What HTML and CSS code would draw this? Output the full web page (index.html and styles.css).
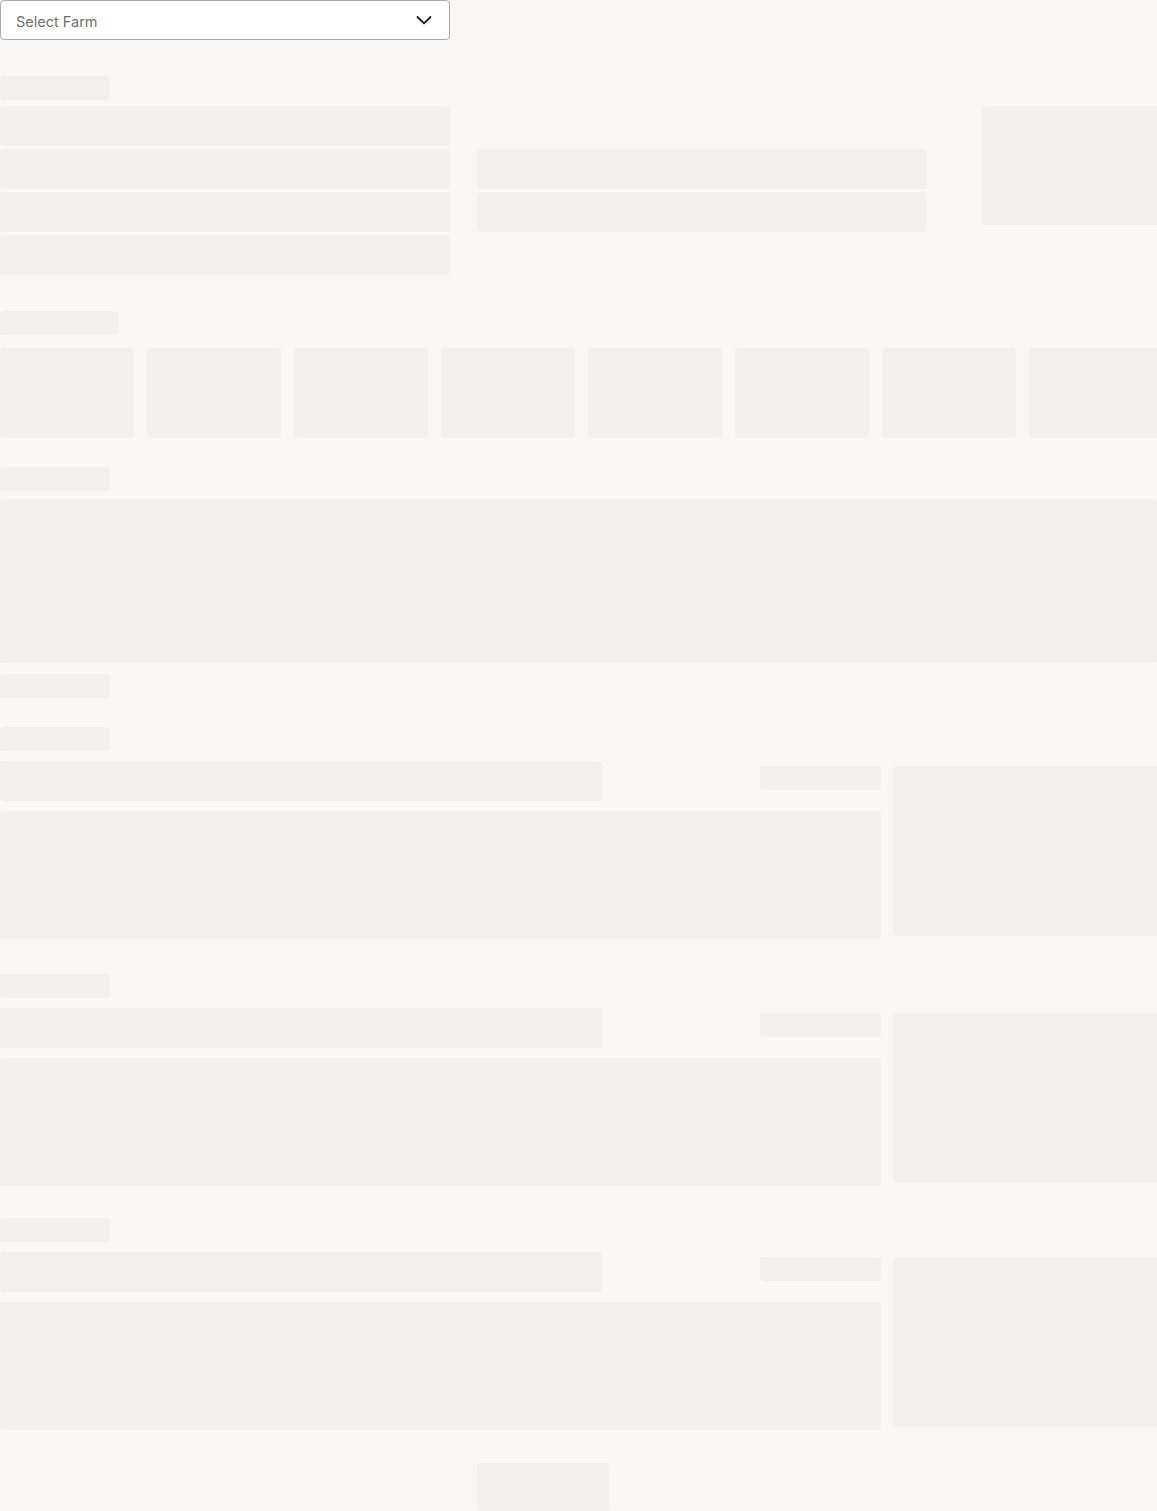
FILE: index.html
```html
<!DOCTYPE html>
<html lang="en">
<head>
<meta charset="utf-8">
<title>Farm dashboard</title>
<link rel="stylesheet" href="styles.css">
</head>
<body>
<div class="page">
  <div class="select">
    <span class="select-text">Select Farm</span>
    <svg class="chevron" width="16" height="10" viewBox="0 0 16 10" aria-hidden="true">
      <path d="M1.5 2 L8 8.3 L14.5 2" fill="none" stroke="#1c1c1c" stroke-width="1.8" stroke-linecap="round" stroke-linejoin="round"/>
    </svg>
  </div>

  <section class="s1">
    <div class="sk label"></div>
    <div class="s1-row">
      <div class="s1-left">
        <div class="sk bar450"></div>
        <div class="sk bar450"></div>
        <div class="sk bar450"></div>
        <div class="sk bar450"></div>
      </div>
      <div class="s1-mid">
        <div class="sk bar450"></div>
        <div class="sk bar450"></div>
      </div>
      <div class="sk s1-side"></div>
    </div>
  </section>

  <section class="s2">
    <div class="sk label label-wide"></div>
    <div class="cards">
      <div class="sk card"></div>
      <div class="sk card"></div>
      <div class="sk card"></div>
      <div class="sk card"></div>
      <div class="sk card"></div>
      <div class="sk card"></div>
      <div class="sk card"></div>
      <div class="sk card"></div>
    </div>
  </section>

  <section class="s3">
    <div class="sk label"></div>
    <div class="sk wide-block"></div>
    <div class="sk label label-after"></div>
  </section>

  <section class="group g1">
    <div class="sk label"></div>
    <div class="group-row">
      <div class="group-left">
        <div class="group-top">
          <div class="sk bar602"></div>
          <div class="sk small-bar"></div>
        </div>
        <div class="sk big-block"></div>
      </div>
      <div class="sk side-block"></div>
    </div>
  </section>

  <section class="group g2">
    <div class="sk label"></div>
    <div class="group-row">
      <div class="group-left">
        <div class="group-top">
          <div class="sk bar602"></div>
          <div class="sk small-bar"></div>
        </div>
        <div class="sk big-block"></div>
      </div>
      <div class="sk side-block"></div>
    </div>
  </section>

  <section class="group g3">
    <div class="sk label"></div>
    <div class="group-row">
      <div class="group-left">
        <div class="group-top">
          <div class="sk bar602"></div>
          <div class="sk small-bar"></div>
        </div>
        <div class="sk big-block"></div>
      </div>
      <div class="sk side-block"></div>
    </div>
  </section>

  <div class="footer">
    <div class="sk button"></div>
  </div>
</div>
</body>
</html>
```

FILE: styles.css
```css
html, body {
  margin: 0;
  padding: 0;
  background: #f9f8f6;
  overflow: hidden;
}

.page {
  width: 1157px;
  font-family: Inter, "Noto Sans", sans-serif;
}

.sk {
  background: #f4f0ed;
  border-radius: 4px;
  flex-shrink: 0;
}

/* select */
.select {
  box-sizing: border-box;
  width: 450px;
  height: 40px;
  background: #ffffff;
  border: 1px solid #a9ada6;
  border-radius: 4px;
  display: flex;
  align-items: center;
  justify-content: space-between;
  padding: 0 17px 0 15px;
}

.select-text {
  font-size: 14.5px;
  color: #6c7269;
  padding-top: 2px;
}

.chevron {
  display: block;
  margin-top: -1px;
}

.label {
  width: 110px;
  height: 24px;
}

.label-wide {
  width: 119px;
}

/* section 1 */
.s1 {
  padding-top: 36px;
}

.s1-row {
  display: flex;
  margin-top: 6px;
}

.s1-left,
.s1-mid {
  display: flex;
  flex-direction: column;
  gap: 3px;
}

.s1-mid {
  align-self: center;
  margin-left: 27px;
}

.bar450 {
  width: 450px;
  height: 40px;
}

.s1-side {
  width: 180px;
  height: 119px;
  margin-left: 55px;
  align-self: flex-start;
}

/* section 2 */
.s2 {
  padding-top: 36px;
}

.cards {
  display: flex;
  gap: 13px;
  margin-top: 13px;
}

.card {
  width: 134px;
  height: 90px;
}

/* section 3 */
.s3 {
  padding-top: 29px;
}

.wide-block {
  width: 1157px;
  height: 164px;
  margin-top: 8px;
}

.label-after {
  margin-top: 11px;
}

/* groups */
.g1 { padding-top: 29px; }
.g2 { padding-top: 35px; }
.g3 { padding-top: 32px; }

.group-row {
  display: flex;
  gap: 12px;
  margin-top: 10px;
}

.group-left {
  width: 881px;
  display: flex;
  flex-direction: column;
  gap: 10px;
}

.group-top {
  display: flex;
  justify-content: space-between;
  align-items: flex-start;
}

.bar602 {
  width: 602px;
  height: 40px;
}

.small-bar {
  width: 121px;
  height: 24px;
  margin-top: 5px;
}

.big-block {
  width: 881px;
  height: 128px;
}

.side-block {
  width: 270px;
  height: 170px;
  margin-top: 5px;
}

/* footer */
.footer {
  padding-top: 33px;
  padding-left: 477px;
}

.button {
  width: 132px;
  height: 48px;
}
```
